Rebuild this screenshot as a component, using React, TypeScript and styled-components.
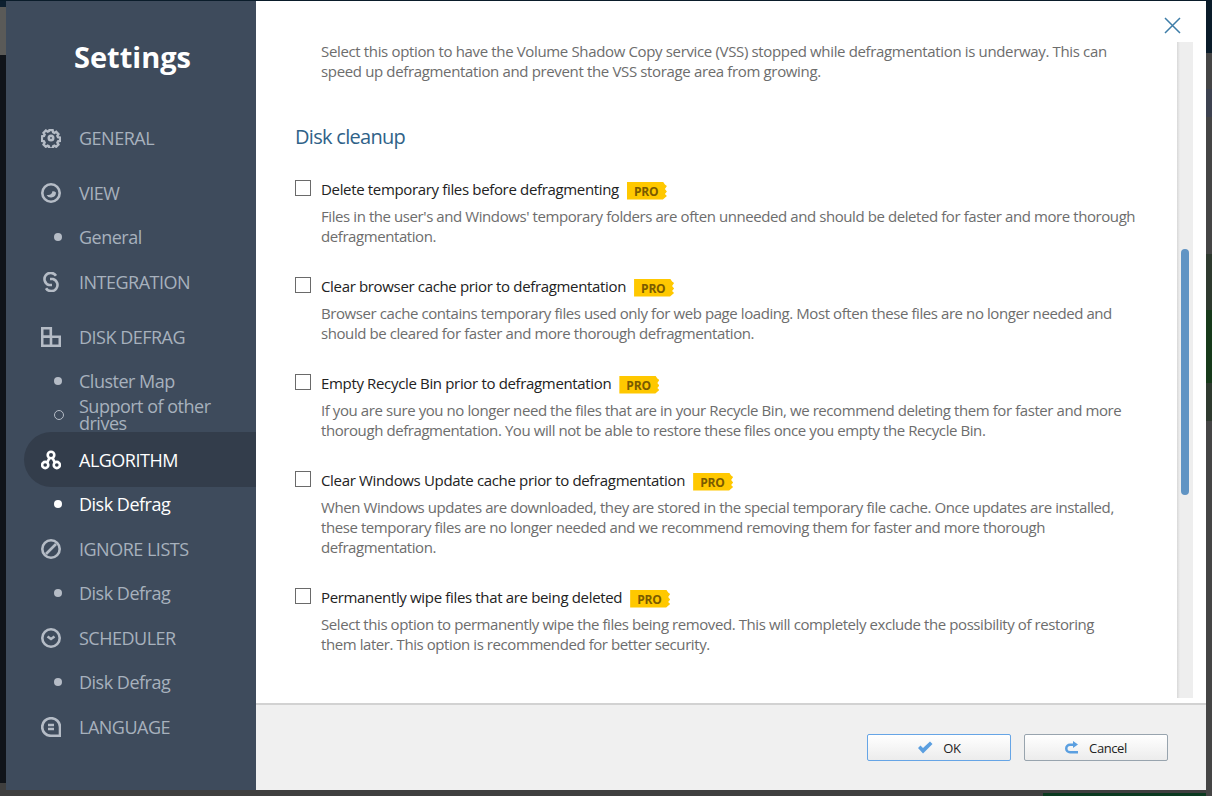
import React from 'react';
import styled, {createGlobalStyle} from 'styled-components';

const GlobalStyle = createGlobalStyle`
  html, body {
    margin: 0;
    padding: 0;
    height: 796px;
    overflow: hidden;
    background: #3f3f3f;
  }
  * { box-sizing: border-box; }
`;

const FONT = `"Open Sans", "Noto Sans", "Liberation Sans", sans-serif`;

const icons: Record<string, React.ReactNode> = {
  gear: (
    <>
      <circle cx="10" cy="10" r="2.2" />
      <path d="M8.2 1.4h3.6l.5 2.3 1.4.7 2-1.2 2.5 2.5-1.2 2 .7 1.4 2.3.5v3.6l-2.3.5-.7 1.4 1.2 2-2.5 2.5-2-1.2-1.4.7-.5 2.3H8.2l-.5-2.3-1.4-.7-2 1.2-2.5-2.5 1.2-2-.7-1.4-2.3-.5V8.2l2.3-.5.7-1.4-1.2-2 2.5-2.5 2 1.2 1.4-.7z" transform="translate(.9 .9) scale(.91)" />
    </>
  ),
  view: (
    <>
      <circle cx="10" cy="10" r="8.7" />
      <path d="M15 9.5a5 5 0 0 1-9.4 2.4c3.4.6 5.6-.8 5.8-3.6 1.2-.4 2.5.2 3.6 1.2z" fill="currentColor" stroke="none" />
    </>
  ),
  integration: (
    <>
      <path d="M15 3.8A6.2 6.2 0 1 0 8 13h3" />
      <path d="M5 16.2A6.2 6.2 0 1 0 12 7H9" />
    </>
  ),
  defrag: (
    <>
      <path d="M1.2 1.2h8.6v8.6H1.2z" />
      <path d="M1.2 9.8h17.6v9H1.2zM10 9.8v9" />
    </>
  ),
  algorithm: (
    <>
      <circle cx="10" cy="5" r="3.3" />
      <circle cx="4.2" cy="15" r="3.1" />
      <circle cx="15.8" cy="15" r="3.1" />
      <path d="M8.4 8 6.2 12.6M11.6 8l2.2 4.6" />
    </>
  ),
  ignore: (
    <>
      <circle cx="10" cy="10" r="8.7" />
      <path d="M5 15 15 5" />
    </>
  ),
  scheduler: (
    <>
      <circle cx="10" cy="10" r="8.7" />
      <path d="m6.5 8.5 3.5 2.5 3.5-2.5" />
    </>
  ),
  language: (
    <>
      <path d="M10 1.2a8.8 8.8 0 1 0 0 17.6h9v-8.8A8.8 8.8 0 0 0 10 1.2z" />
      <path d="M7 8h6M7 12h6" />
    </>
  ),
};

const Page = styled.div`
  width: 1212px;
  height: 796px;
  padding: 1px 6px 6px;
  background:
    linear-gradient(#0a1c2a 0 1px, transparent 1px) 0 0 / 100% 100% no-repeat,
    linear-gradient(#0e2030 0 7px, #5a5a58 7px 55px, #10141a 55px 783px, transparent 783px) 0 0 / 6px 100% no-repeat,
    linear-gradient(#0a1c2a 0 53px, #454545 53px 89px, #3d4250 89px 117px, #454545 117px 254px, #2f3a2f 254px 310px, #173a1a 310px 383px, #2f3a2f 383px 421px, #454545 421px) 100% 0 / 6px 100% no-repeat,
    linear-gradient(#0b3a20, #0b3a20) 100% 100% / 169px 3px no-repeat,
    #3f3f3f;
`;

const Dialog = styled.div`
  position: relative;
  display: flex;
  width: 1200px;
  height: 789px;
  font-family: ${FONT};
  background: #fff;
`;

const Sidebar = styled.aside`
  flex: 0 0 250px;
  background: #3e4b5c;
  padding-left: 18px;
`;

const Title = styled.h1`
  margin: 0;
  padding: 36px 0 0 50px;
  height: 109px;
  font-size: 29px;
  line-height: 40px;
  font-weight: 700;
  color: #fff;
`;

const Nav = styled.nav`
  display: flex;
  flex-direction: column;
`;

const NavHead = styled.div<{$active?: boolean}>`
  display: flex;
  align-items: center;
  height: 55px;
  padding-left: 17px;
  border-radius: 28px 0 0 28px;
  font-size: 18px;
  letter-spacing: -0.5px;
  color: ${p => (p.$active ? '#fff' : '#a7b1bd')};
  background: ${p => (p.$active ? '#333d4b' : 'transparent')};
`;

const NavIcon = styled.svg<{$active?: boolean}>`
  flex: 0 0 20px;
  width: 20px;
  height: 20px;
  margin-right: 18px;
  fill: none;
  stroke: ${p => (p.$active ? '#fff' : '#b5bcc6')};
  color: ${p => (p.$active ? '#fff' : '#b5bcc6')};
  stroke-width: 2.6;
`;

const NavSub = styled.div<{$active?: boolean; $hollow?: boolean}>`
  display: flex;
  align-items: center;
  height: 34px;
  padding-left: 30px;
  font-size: 18px;
  line-height: 17px;
  letter-spacing: -0.5px;
  color: ${p => (p.$active ? '#fff' : '#a7b1bd')};
  &::before {
    content: '';
    flex: 0 0 8px;
    height: 8px;
    margin-right: ${p => (p.$hollow ? '15px' : '17px')};
    border-radius: 50%;
    background: ${p => (p.$hollow ? 'transparent' : p.$active ? '#fff' : '#b5bcc6')};
    border: ${p => (p.$hollow ? '1.5px solid #b5bcc6' : 'none')};
  }
`;

const Main = styled.main`
  flex: 1;
  min-width: 0;
  display: flex;
  flex-direction: column;
`;

const Content = styled.div`
  flex: 0 0 702px;
  display: flex;
  padding-top: 40px;
`;

const Scroller = styled.div`
  flex: 1;
  padding: 0 20px 0 39px;
  height: 656px;
  overflow: hidden;
`;

const Lead = styled.p`
  margin: 0 0 0 26px;
  font-size: 15px;
  line-height: 20px;
  letter-spacing: -0.35px;
  color: #6d6d6d;
  white-space: pre-line;
`;

const SectionTitle = styled.h2`
  margin: 42px 0 29px;
  font-size: 20px;
  line-height: 27px;
  font-weight: 400;
  letter-spacing: -0.7px;
  color: #2f6288;
`;

const Options = styled.div`
  display: flex;
  flex-direction: column;
  gap: 30px;
`;

const Option = styled.div`
  display: grid;
  grid-template-columns: 16px 1fr;
  column-gap: 10px;
`;

const CheckBox = styled.span`
  width: 16px;
  height: 16px;
  margin-top: 1px;
  border: 1px solid #6a6a6a;
  background: #fff;
`;

const Label = styled.div`
  display: flex;
  align-items: center;
  height: 20px;
  font-size: 15px;
  letter-spacing: -0.34px;
  color: #222;
`;

const Pro = styled.span`
  width: 40px;
  height: 18px;
  margin: 3px 0 0 8px;
  padding-left: 7px;
  font-size: 12px;
  line-height: 19px;
  font-weight: 700;
  letter-spacing: -0.2px;
  color: #7a5a00;
  background: #ffc800;
  clip-path: polygon(0 0, 90% 0, 95% 17%, 100% 25%, 95% 42%, 100% 55%, 95% 70%, 100% 80%, 90% 100%, 0 100%);
`;

const Desc = styled.p`
  grid-column: 2;
  margin: 7px 0 0;
  font-size: 15px;
  line-height: 20px;
  letter-spacing: -0.42px;
  color: #6d6d6d;
  white-space: pre-line;
`;

const Track = styled.div`
  flex: 0 0 14px;
  height: 656px;
  margin: 1px 13px 0 0;
  padding: 0 4px;
  background: linear-gradient(90deg, #d8d8d8, #eeeeee 3px);
`;

const Thumb = styled.div`
  width: 8px;
  height: 246px;
  margin-top: 207px;
  border-radius: 4px;
  background: #6094c4;
`;

const Footer = styled.footer`
  flex: 1;
  display: flex;
  justify-content: flex-end;
  gap: 13px;
  padding: 29px 38px 0 0;
  border-top: 2px solid #d2d2d2;
  background: #f0f0f0;
`;

const Button = styled.button<{$primary?: boolean}>`
  display: flex;
  align-items: center;
  justify-content: center;
  gap: 10px;
  width: 144px;
  height: 27px;
  padding: 0;
  font-family: ${FONT};
  font-size: 13px;
  letter-spacing: -0.4px;
  color: #222;
  border: 1px solid ${p => (p.$primary ? '#66a5e6' : '#98a4ae')};
  border-radius: 2px;
  background: linear-gradient(#ffffff, #ececec);
`;

const Close = styled.svg`
  position: absolute;
  top: 16px;
  right: 25px;
  width: 17px;
  height: 17px;
  stroke: #3e7da8;
  stroke-width: 1.5;
  fill: none;
`;

type NavEntry = {
  label: string;
  icon?: string;
  active?: boolean;
  hollow?: boolean;
};

const nav: NavEntry[] = [
  {label: 'GENERAL', icon: 'gear'},
  {label: 'VIEW', icon: 'view'},
  {label: 'General'},
  {label: 'INTEGRATION', icon: 'integration'},
  {label: 'DISK DEFRAG', icon: 'defrag'},
  {label: 'Cluster Map'},
  {label: 'Support of other drives', hollow: true},
  {label: 'ALGORITHM', icon: 'algorithm', active: true},
  {label: 'Disk Defrag', active: true},
  {label: 'IGNORE LISTS', icon: 'ignore'},
  {label: 'Disk Defrag'},
  {label: 'SCHEDULER', icon: 'scheduler'},
  {label: 'Disk Defrag'},
  {label: 'LANGUAGE', icon: 'language'},
];

const options = [
  {
    label: 'Delete temporary files before defragmenting',
    desc: "Files in the user's and Windows' temporary folders are often unneeded and should be deleted for faster and more thorough\ndefragmentation.",
  },
  {
    label: 'Clear browser cache prior to defragmentation',
    desc: 'Browser cache contains temporary files used only for web page loading. Most often these files are no longer needed and\nshould be cleared for faster and more thorough defragmentation.',
  },
  {
    label: 'Empty Recycle Bin prior to defragmentation',
    desc: 'If you are sure you no longer need the files that are in your Recycle Bin, we recommend deleting them for faster and more\nthorough defragmentation. You will not be able to restore these files once you empty the Recycle Bin.',
  },
  {
    label: 'Clear Windows Update cache prior to defragmentation',
    desc: 'When Windows updates are downloaded, they are stored in the special temporary file cache. Once updates are installed,\nthese temporary files are no longer needed and we recommend removing them for faster and more thorough\ndefragmentation.',
  },
  {
    label: 'Permanently wipe files that are being deleted',
    desc: 'Select this option to permanently wipe the files being removed. This will completely exclude the possibility of restoring\nthem later. This option is recommended for better security.',
  },
];

export default function App() {
  return (
    <>
      <GlobalStyle />
      <Page>
        <Dialog>
          <Sidebar>
            <Title>Settings</Title>
            <Nav>
              {nav.map((item, i) =>
                item.icon ? (
                  <NavHead key={i} $active={item.active}>
                    <NavIcon viewBox="0 0 20 20" $active={item.active}>
                      {icons[item.icon]}
                    </NavIcon>
                    {item.label}
                  </NavHead>
                ) : (
                  <NavSub key={i} $active={item.active} $hollow={item.hollow}>
                    {item.label}
                  </NavSub>
                ),
              )}
            </Nav>
          </Sidebar>
          <Main>
            <Content>
              <Scroller>
                <Lead>
                  {'Select this option to have the Volume Shadow Copy service (VSS) stopped while defragmentation is underway. This can\nspeed up defragmentation and prevent the VSS storage area from growing.'}
                </Lead>
                <SectionTitle>Disk cleanup</SectionTitle>
                <Options>
                  {options.map(o => (
                    <Option key={o.label}>
                      <CheckBox />
                      <Label>
                        {o.label}
                        <Pro>PRO</Pro>
                      </Label>
                      <Desc>{o.desc}</Desc>
                    </Option>
                  ))}
                </Options>
              </Scroller>
              <Track>
                <Thumb />
              </Track>
            </Content>
            <Footer>
              <Button $primary>
                <svg width="16" height="13" viewBox="0 0 16 13">
                  <path d="M1 7l2.5-2.5L6 7l7-6.5L15.5 3 6 12.5z" fill="#5b9fe0" />
                </svg>
                OK
              </Button>
              <Button>
                <svg width="14" height="13" viewBox="0 0 14 13">
                  <path
                    d="M8 0l5 3.5L8 7V5H5a2.5 2.5 0 0 0 0 5h8v2.5H5A5 5 0 0 1 5 2.5h3z"
                    fill="#5b9fe0"
                  />
                </svg>
                Cancel
              </Button>
            </Footer>
          </Main>
          <Close viewBox="0 0 17 17">
            <path d="M1 1l15 15M16 1 1 16" />
          </Close>
        </Dialog>
      </Page>
    </>
  );
}
